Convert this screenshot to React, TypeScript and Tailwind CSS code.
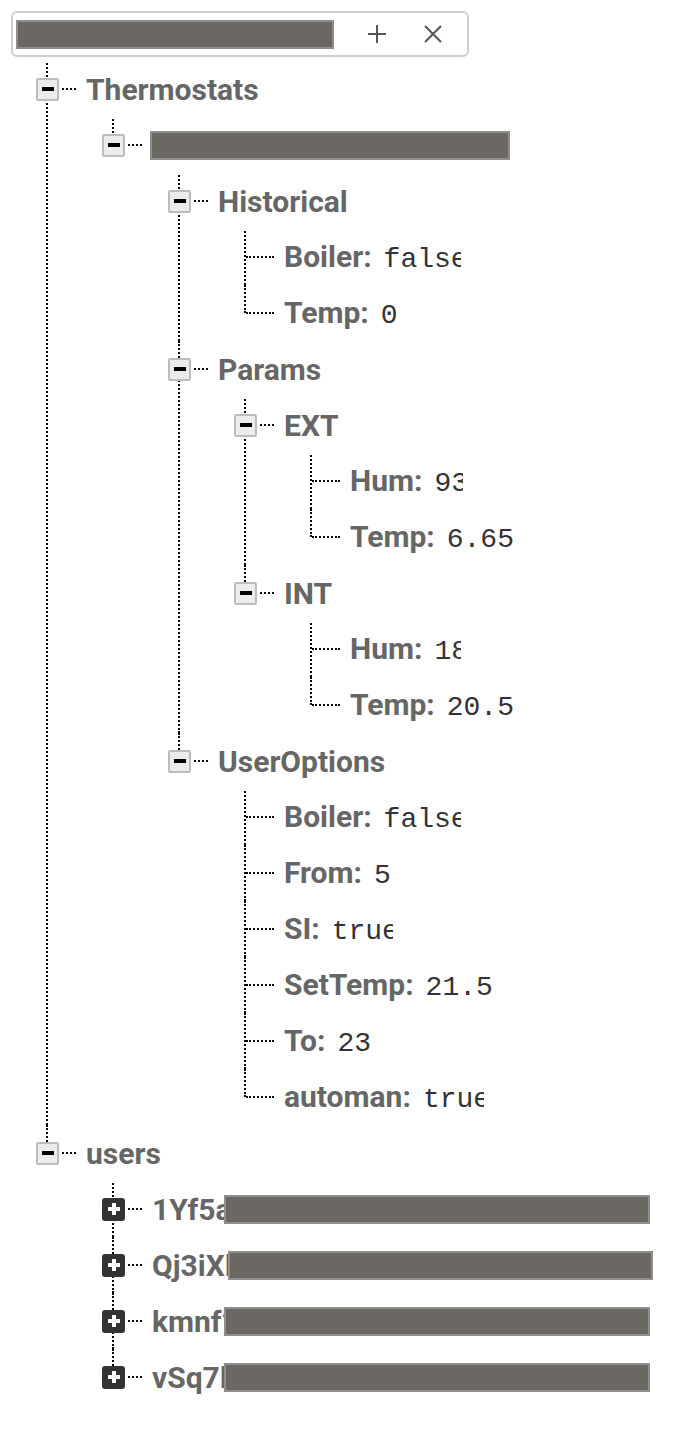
import React from "react";

type Node = {
  k?: string;
  v?: string;
  vw?: string;
  bar?: boolean;
  userBar?: { text: string; tw: string; bw: string };
  collapsed?: boolean;
  children?: Node[];
};

const PL = ["pl-[36px]", "pl-[102px]", "pl-[168px]", "pl-[234px]", "pl-[300px]"];
const LINE_LEFT = ["left-[46px]", "left-[112px]", "left-[178px]", "left-[244px]", "left-[310px]"];

const tree: Node[] = [
  {
    k: "Thermostats",
    children: [
      {
        bar: true,
        children: [
          {
            k: "Historical",
            children: [
              { k: "Boiler", v: "false", vw: "w-[77px]" },
              { k: "Temp", v: "0" },
            ],
          },
          {
            k: "Params",
            children: [
              {
                k: "EXT",
                children: [
                  { k: "Hum", v: "93", vw: "w-[29px]" },
                  { k: "Temp", v: "6.65", vw: "w-[72px]" },
                ],
              },
              {
                k: "INT",
                children: [
                  { k: "Hum", v: "18", vw: "w-[27px]" },
                  { k: "Temp", v: "20.5", vw: "w-[72px]" },
                ],
              },
            ],
          },
          {
            k: "UserOptions",
            children: [
              { k: "Boiler", v: "false", vw: "w-[77px]" },
              { k: "From", v: "5" },
              { k: "SI", v: "true", vw: "w-[61px]" },
              { k: "SetTemp", v: "21.5", vw: "w-[75px]" },
              { k: "To", v: "23" },
              { k: "automan", v: "true", vw: "w-[61px]" },
            ],
          },
        ],
      },
    ],
  },
  {
    k: "users",
    children: [
      { collapsed: true, userBar: { text: "1Yf5a", tw: "w-[72px]", bw: "w-[426px]" } },
      { collapsed: true, userBar: { text: "Qj3iXl", tw: "w-[76px]", bw: "w-[425px]" } },
      { collapsed: true, userBar: { text: "kmnf\u2019", tw: "w-[72px]", bw: "w-[426px]" } },
      { collapsed: true, userBar: { text: "vSq7l", tw: "w-[72px]", bw: "w-[426px]" } },
    ],
  },
];

function MinusBox() {
  return (
    <div className="relative flex h-[23px] w-[23px] shrink-0 items-center justify-center rounded-[2px] border-2 border-[#bcbcbc] bg-[#ececec]">
      <div className="h-[4px] w-[12px] bg-black" />
    </div>
  );
}

function PlusBox() {
  return (
    <div className="relative flex h-[23px] w-[23px] shrink-0 items-center justify-center rounded-[3px] bg-[#333333]">
      <div className="absolute h-[4px] w-[12px] bg-white" />
      <div className="absolute h-[12px] w-[4px] bg-white" />
    </div>
  );
}

function Label({ node }: { node: Node }) {
  if (node.bar) {
    return <div className="ml-[8px] h-[29px] w-[360px] border-2 border-[#8e8e8e] bg-[#6b6864]" />;
  }
  if (node.userBar) {
    return (
      <div className="ml-[10px] flex items-center">
        <span className={`${node.userBar.tw} overflow-hidden whitespace-nowrap`}>{node.userBar.text}</span>
        <div className={`${node.userBar.bw} h-[29px] shrink-0 border-2 border-[#8e8e8e] bg-[#6b6864]`} />
      </div>
    );
  }
  return (
    <div className="ml-[10px] flex items-baseline whitespace-nowrap">
      <span>{node.k}{node.v !== undefined ? ":" : ""}</span>
      {node.v !== undefined && (
        <span
          className={`ml-[12px] inline-block overflow-hidden whitespace-nowrap font-['Liberation_Mono',monospace] text-[28px] font-normal text-[#333333] ${node.vw ?? ""}`}
        >
          {node.v}
        </span>
      )}
    </div>
  );
}

function Row({ node, level }: { node: Node; level: number }) {
  const hasToggle = !!node.children || node.collapsed;
  return (
    <div className={`flex h-[56px] items-center ${PL[level]}`}>
      {hasToggle ? (
        <>
          {node.collapsed ? <PlusBox /> : <MinusBox />}
          <div className="ml-[3px] h-0 w-[14px] border-t-2 border-dotted border-black" />
        </>
      ) : (
        <div className="ml-[12px] h-0 w-[28px] border-t-2 border-dotted border-black" />
      )}
      <Label node={node} />
    </div>
  );
}

function Group({ items, level }: { items: Node[]; level: number }) {
  return (
    <div>
      {items.map((it, i) => {
        const first = i === 0;
        const last = i === items.length - 1;
        const lineCls =
          first && last
            ? "top-[2px] h-[26px]"
            : first
            ? "top-[2px] bottom-0"
            : last
            ? "top-0 h-[28px]"
            : "top-0 bottom-0";
        return (
          <div key={i} className="relative">
            <div className={`absolute ${LINE_LEFT[level]} ${lineCls} w-0 border-l-2 border-dotted border-black`} />
            <Row node={it} level={level} />
            {it.children && !it.collapsed && <Group items={it.children} level={level + 1} />}
          </div>
        );
      })}
    </div>
  );
}

export default function App() {
  return (
    <div className="min-h-screen w-full bg-white font-['Roboto',sans-serif] text-[30px] font-bold text-[#666666]">
      <div className="pl-[11px] pt-[11px]">
        <div className="flex h-[46px] w-[458px] items-center rounded-[6px] border-2 border-[#cfcfcf] pl-[3px]">
          <div className="h-[29px] w-[318px] border-2 border-[#8e8e8e] bg-[#6b6864]" />
          <svg className="ml-[33px]" width="20" height="20" viewBox="0 0 20 20">
            <path d="M10 1v18M1 10h18" stroke="#555" strokeWidth="2" />
          </svg>
          <svg className="ml-[36px]" width="20" height="20" viewBox="0 0 20 20">
            <path d="M2 2l16 16M18 2L2 18" stroke="#555" strokeWidth="2" />
          </svg>
        </div>
      </div>
      <div className="pt-[4px]">
        <Group items={tree} level={0} />
      </div>
    </div>
  );
}
